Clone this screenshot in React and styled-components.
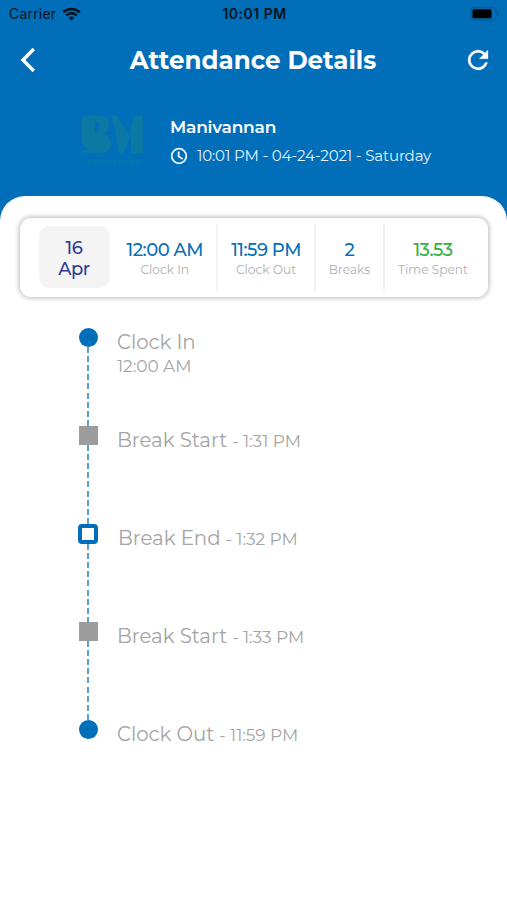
import React from 'react';
import styled, { createGlobalStyle } from 'styled-components';

const GlobalStyle = createGlobalStyle`
  * {
    box-sizing: border-box;
  }

  body {
    margin: 0;
    background: #fff;
    font-family: Montserrat, Inter, sans-serif;
  }
`;

const Screen = styled.div`
  width: 507px;
  height: 900px;
  overflow: hidden;
  background: linear-gradient(#006eb9 240px, #fff 240px);
`;

const Text = styled.span`
  display: block;
  white-space: nowrap;
  font-size: ${(props) => props.$size}px;
  line-height: ${(props) => props.$line || 20}px;
  font-weight: ${(props) => props.$weight || 400};
  letter-spacing: ${(props) => props.$spacing || 0}px;
  color: ${(props) => props.$color || '#fff'};
`;

const StatusText = styled(Text)`
  font-family: Inter, sans-serif;
`;

const Title = styled.h1`
  margin: 0;
  font-size: 24.5px;
  line-height: 30px;
  font-weight: 700;
  color: #fff;
`;

const StatusBar = styled.div`
  display: grid;
  grid-template-columns: 1fr auto 1fr;
  align-items: center;
  height: 28px;
  padding: 0 7px 0 9px;
`;

const Carrier = styled.div`
  display: flex;
  align-items: center;
  gap: 6px;
`;

const Battery = styled.svg`
  justify-self: end;
`;

const NavBar = styled.header`
  display: grid;
  grid-template-columns: 40px 1fr 40px;
  align-items: center;
  justify-items: center;
  height: 64px;
  padding: 0 9px 0 8px;
`;

const Profile = styled.section`
  display: flex;
  height: 104px;
  padding: 20px 0 0 79px;
`;

const ProfileText = styled.div`
  padding: 5px 0 0 22px;
`;

const DateLine = styled.div`
  display: flex;
  align-items: center;
  gap: 9px;
  margin-top: 9px;
`;

const Sheet = styled.main`
  height: 704px;
  padding: 22px 19px 0 20px;
  border-radius: 25px 25px 0 0;
  background: #fff;
`;

const Summary = styled.section`
  display: grid;
  grid-template-columns: 71px 108.5px 98px 69px 98px;
  height: 79px;
  padding: 6px 0 6px 18.5px;
  border-radius: 11px;
  background: #fff;
  box-shadow: 0 0 5px 1px rgba(0, 0, 0, 0.28);
`;

const DateBox = styled.div`
  display: flex;
  flex-direction: column;
  align-items: center;
  height: 62px;
  margin-top: 2px;
  padding-top: 12px;
  border-radius: 10px;
  background: #f4f4f4;
`;

const Stat = styled.div`
  display: flex;
  flex-direction: column;
  align-items: center;
  padding: 15px ${(props) => props.$last ? 2 : 0}px 0 ${(props) => props.$indent || 0}px;
  border-right: ${(props) => props.$last ? '0' : '2px solid #f2f2f2'};
`;

const Timeline = styled.ol`
  list-style: none;
  margin: 0;
  padding: 31px 0 0 58px;
`;

const Step = styled.li`
  display: flex;
  height: 98.1px;
`;

const Rail = styled.div`
  display: flex;
  flex-direction: column;
  align-items: center;
  width: 20px;
`;

const Marker = styled.div`
  flex: none;
  width: ${(props) => props.$kind === 'end' ? 20 : 19}px;
  height: ${(props) => props.$kind === 'end' ? 20 : 19}px;
  border: ${(props) => props.$kind === 'end' ? '4px solid #006eb9' : '0'};
  border-radius: ${(props) => ({ clock: '50%', end: '4px' })[props.$kind] || '0'};
  background: ${(props) => ({ clock: '#006eb9', end: '#fff' })[props.$kind] || '#9c9c9c'};
`;

const Dashes = styled.div`
  flex: 1;
  width: 2.5px;
  background: repeating-linear-gradient(#58a2d6 0 6px, transparent 6px 9.1px);
`;

const StepText = styled.div`
  display: flex;
  flex-direction: ${(props) => props.$stacked ? 'column' : 'row'};
  align-items: baseline;
  gap: ${(props) => props.$stacked ? 0 : 5}px;
  padding: 2px 0 0 ${(props) => props.$indent || 19}px;
`;

const stats = [
  { value: '12:00 AM', label: 'Clock In', indent: 4 },
  { value: '11:59 PM', label: 'Clock Out' },
  { value: '2', label: 'Breaks' },
  { value: '13.53', label: 'Time Spent', color: '#35ae42' },
];

const steps = [
  { kind: 'clock', name: 'Clock In', time: '12:00 AM', stacked: true },
  { kind: 'start', name: 'Break Start', time: '- 1:31 PM' },
  { kind: 'end', name: 'Break End', time: '- 1:32 PM', indent: 20 },
  { kind: 'start', name: 'Break Start', time: '- 1:33 PM' },
  { kind: 'clock', name: 'Clock Out', time: '- 11:59 PM' },
];

const WifiIcon = () => (
  <svg width="19" height="14" viewBox="0 0 19 14" fill="none" stroke="#06131d" strokeWidth="2.5">
    <path d="M1.3 5.2a11.8 11.8 0 0 1 16.4 0" />
    <path d="M4.3 8.4a7.5 7.5 0 0 1 10.4 0" />
    <path d="M9.5 13.7 6.7 10.8a4 4 0 0 1 5.6 0Z" fill="#06131d" stroke="none" />
  </svg>
);

// monogram mark with the company name under it
const Logo = () => (
  <svg width="69" height="56" viewBox="0 0 69 56" fill="#0b79a4">
    <path
      fillRule="evenodd"
      d="M8 3.5h13c6 0 9 3 9 9 0 5-2 8-5 9.5 5 1.5 7 5 7 9.5 0 6-4 9.5-10 9.5H2v-2c3 0 5-1 7-3l-2-1c-3-1-4-3-4-6V9c0-3.5 2-5.5 5-5.5Zm8 5v12c3 0 4.5-2 4.5-6s-1.500-6-4.500-6Z"
    />
    <path d="M32 3.5h6l12 20 5-20h9v34.5l3 3H52V20l-7 21h-5L35 14Z" />
    <text x="4" y="53" fontSize="5.5" fontWeight="600" letterSpacing="1.1" fontFamily="Inter, sans-serif">TECHNOVATION</text>
  </svg>
);

const App = () => (
  <>
    <GlobalStyle />
    <Screen>
      <StatusBar>
        <Carrier>
          <StatusText $size={14} $spacing={0.2} $color="#06131d">Carrier</StatusText>
          <WifiIcon />
        </Carrier>
        <StatusText $size={14} $weight={600} $spacing={0.5} $color="#06131d">10:01 PM</StatusText>
        <Battery width="30" height="14" viewBox="0 0 30 14" fill="none">
          <rect x="1" y="0.7" width="25" height="12.3" rx="3.5" stroke="#07568c" strokeWidth="1.2" />
          <rect x="2.5" y="2.3" width="19" height="9" rx="1.5" fill="#000" />
          <path d="M27.3 4.5v4.8c2-1 2-3.8 0-4.8Z" fill="#07568c" />
        </Battery>
      </StatusBar>

      <NavBar>
        <svg width="16" height="26" viewBox="0 0 16 26" fill="none" stroke="#fff" strokeWidth="3.4">
          <path d="M13.8 2 3 13l10.8 11" />
        </svg>
        <Title>Attendance Details</Title>
        <svg width="30" height="30" viewBox="0 0 24 24" fill="#fff" stroke="#fff" strokeWidth="0.2">
          <path d="M17.65 6.35A7.96 7.96 0 0 0 12 4a8 8 0 1 0 7.73 10h-2.08A6 6 0 1 1 12 6c1.66 0 3.14.69 4.22 1.78L13 11h7V4l-2.35 2.35Z" />
        </svg>
      </NavBar>

      <Profile>
        <Logo />
        <ProfileText>
          <Text $size={17} $weight={600} $spacing={-0.2}>Manivannan</Text>
          <DateLine>
            <svg width="18" height="18" viewBox="0 0 18 18" fill="none" stroke="#e8f7ff" strokeWidth="1.8">
              <circle cx="9" cy="9" r="7.3" />
              <path d="M8.7 4.5v5l4 2.4" />
            </svg>
            <Text $size={15} $spacing={-0.14} $color="#e4f4ff">10:01 PM - 04-24-2021 - Saturday</Text>
          </DateLine>
        </ProfileText>
      </Profile>

      <Sheet>
        <Summary>
          <DateBox>
            <Text $size={18} $line={21} $weight={500} $spacing={-0.4} $color="#2e3e95">16</Text>
            <Text $size={18} $line={21} $weight={500} $spacing={-0.4} $color="#2e3e95">Apr</Text>
          </DateBox>
          {stats.map((stat, i) => (
            <Stat key={stat.label} $indent={stat.indent} $last={i === stats.length - 1}>
              <Text $size={18} $line={22} $weight={500} $spacing={-0.5} $color={stat.color || '#086fb6'}>{stat.value}</Text>
              <Text $size={12.2} $line={18} $color="#b0b0b0">{stat.label}</Text>
            </Stat>
          ))}
        </Summary>

        <Timeline>
          {steps.map((step, i) => (
            <Step key={i}>
              <Rail>
                <Marker $kind={step.kind} />
                {i < steps.length - 1 && <Dashes />}
              </Rail>
              <StepText $stacked={step.stacked} $indent={step.indent}>
                <Text $size={19.8} $line={24} $spacing={-0.05} $color="#a4a4a4">{step.name}</Text>
                <Text $size={17} $line={24} $spacing={-0.05} $color="#a4a4a4">{step.time}</Text>
              </StepText>
            </Step>
          ))}
        </Timeline>
      </Sheet>
    </Screen>
  </>
);

export default App;
